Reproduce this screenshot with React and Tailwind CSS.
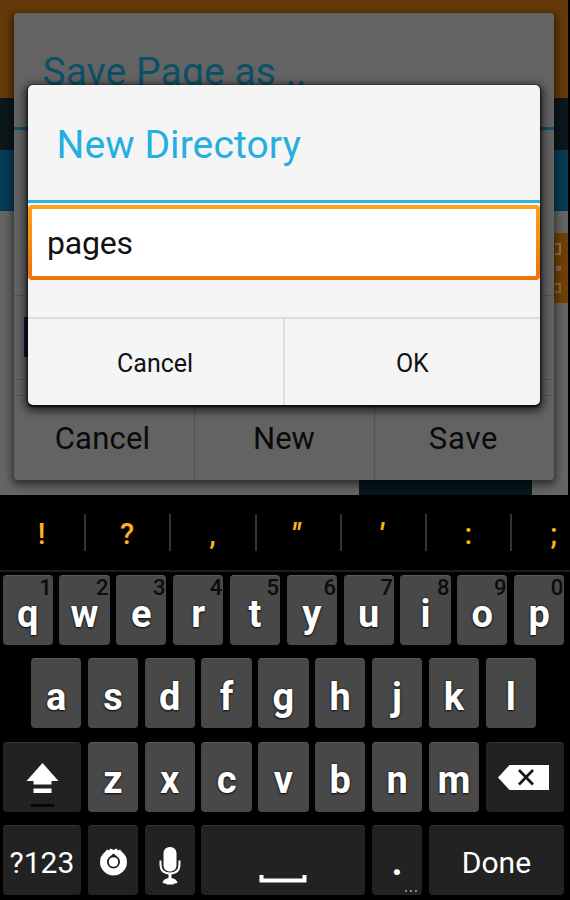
import React from "react";

const keyText = "[text-shadow:0_1px_2px_#111,0_0_2px_#111]";

function Key({ ch, hint }) {
  return (
    <div className="relative flex h-[70px] w-[50.2px] shrink-0 justify-center rounded-[4px] border-t border-[#5c5c5c] bg-[#484848]">
      <span className={"pt-[15.500px] text-[38px] leading-[44px] font-bold text-white " + keyText}>{ch}</span>
      {hint && <span className="absolute top-0 right-[1px] text-[22px] leading-6 font-medium text-[#0c0c0c]">{hint}</span>}
    </div>
  );
}

function DarkKey({ className, children }) {
  return (
    <div className={"relative flex h-[70px] shrink-0 items-center justify-center rounded-[4px] border-t border-[#343434] bg-[#222] text-white " + className}>
      {children}
    </div>
  );
}

const hints = "1234567890";

function Keyboard() {
  return (
    <div className="relative h-[405px] bg-black">
      <div className="flex h-[77px] items-center overflow-hidden border-b-2 border-[#1c1c1c] text-[29px] font-medium text-[#fdb31a]">
        {["!", "?", ",", '"', "'", ":", ";"].map((c) => (
          <div key={c} className="flex h-[37px] w-[85.3px] shrink-0 items-center justify-center border-r-2 border-[#343434] pt-[5px] pr-[1px] first:w-[86px]">
            <span className={c === '"' || c === "'" ? "pr-[4px] font-bold italic" : ""}>{c}</span>
          </div>
        ))}
      </div>
      <div className="flex flex-col gap-[13.4px] pt-[3px]">
        <div className="flex gap-[6.65px] pl-[2.6px]">
          {"qwertyuiop".split("").map((c, i) => <Key key={c} ch={c} hint={hints[i]} />)}
        </div>
        <div className="flex gap-[6.65px] pl-[31px]">
          {"asdfghjkl".split("").map((c) => <Key key={c} ch={c} />)}
        </div>
        <div className="flex gap-[6.65px] pl-[2.6px]">
          <DarkKey className="w-[78.6px]">
            <svg className="absolute top-0 left-0" width="78" height="69" viewBox="0 0 78 69">
              <path d="M39.5 20 L55.5 38 H48.5 V41.5 H30.5 V38 H23.5 Z M30.5 45.5 H48.5 V50 H30.5 Z" fill="#fff" />
              <rect x="27.500" y="61" width="24" height="3" rx="1" fill="#080808" />
            </svg>
          </DarkKey>
          {"zxcvbnm".split("").map((c) => <Key key={c} ch={c} />)}
          <DarkKey className="w-[78.6px]">
            <svg className="absolute top-0 left-0" width="78" height="69" viewBox="0 0 78 69">
              <path d="M12 34.5 L23.500 22 H63 V47 H23.500 Z" fill="#fff" />
              <path d="M33 27 L47 41.500 M47 27 L33 41.500" stroke="#151515" strokeWidth="2.600" />
            </svg>
          </DarkKey>
        </div>
        <div className="flex gap-[6.65px] pl-[2.6px]">
          <DarkKey className="w-[78.6px] pt-[3px] text-[30px]">?123</DarkKey>
          <DarkKey className="w-[50.2px]">
            <svg className="absolute top-0 left-0" width="50" height="69" viewBox="0 0 50 69">
              <path d="M17 26 L19 23.500 L21 24.500 L22.500 22.500 L25.500 24 L28.500 22.500 L30 24.500 L32 23.500 L34 26 Q39 30 39 36 A13.500 13.500 0 0 1 12 36 Q12 30 17 26 Z" fill="#fff" />
              <path d="M25.500 27.500 L29 30.500 Q32 32.500 32 36 A6.500 6.500 0 0 1 19 36 Q19 32.500 22 30.500 Z" fill="#1a1a1a" />
              <circle cx="25.500" cy="36" r="4.800" fill="#fff" />
            </svg>
          </DarkKey>
          <DarkKey className="w-[50.2px]">
            <svg className="absolute top-0 left-0" width="50" height="69" viewBox="0 0 50 69">
              <rect x="18.500" y="21" width="13" height="24.500" rx="6" fill="#fff" />
              <path d="M15.500 34.500 V38 Q15.500 47.500 25 47.500 Q34.500 47.500 34.500 38 V34.500" fill="none" stroke="#fff" strokeWidth="2" />
              <path d="M23.500 47 H26.500 V52 Q32 53 32.500 57 Q29 57 28 58.500 H22 Q21 57 17.500 57 Q18 53 23.500 52 Z" fill="#fff" />
            </svg>
          </DarkKey>
          <DarkKey className="w-[163.8px]">
            <svg className="absolute top-0 left-0" width="163" height="69" viewBox="0 0 163 69">
              <path d="M60.500 49 V54.500 H103.500 V49" fill="none" stroke="#fff" strokeWidth="4" />
            </svg>
          </DarkKey>
          <DarkKey className="w-[50.2px]">
            <span className="pt-[4px] text-[38px] font-bold">.</span>
            <span className="absolute right-[5px] bottom-[3px] flex gap-[3px]">
              <i className="size-[2px] bg-[#888]" /><i className="size-[2px] bg-[#888]" /><i className="size-[2px] bg-[#888]" />
            </span>
          </DarkKey>
          <DarkKey className="w-[135.4px] pt-[3px] text-[30px]">Done</DarkKey>
        </div>
      </div>
    </div>
  );
}

function SaveDialog() {
  return (
    <div className="absolute top-[12.5px] left-[13.5px] flex h-[467px] w-[540px] flex-col rounded-[4px] bg-[#636363] shadow-[0_3px_9px_2px_rgba(0,0,0,0.55)]">
      <div className="h-[117px] border-b-[3px] border-[#0d5266] pt-[35px] pl-[29px] text-[39px] leading-[48px] tracking-[0.1px] whitespace-nowrap text-[#0c5068]">Save Page as ..</div>
      <div className="h-[166px] border-b border-[#525252]" />
      <div className="relative h-[84px] border-b border-[#525252]">
        <div className="absolute top-[21px] left-[10px] h-[40px] w-[8px] bg-[#10183c]" />
      </div>
      <div className="h-[16px] border-b border-[#525252]" />
      <div className="flex flex-1 text-[31px] leading-9 text-[#0a0a0a]">
        <div className="w-[181px] border-r border-[#525252] pt-[25px] pr-[2px] text-center tracking-[0.2px]">Cancel</div>
        <div className="w-[180px] border-r border-[#525252] pt-[25px] text-center">New</div>
        <div className="flex-1 pt-[25px] pr-[1px] text-center tracking-[0.8px]">Save</div>
      </div>
    </div>
  );
}

function NewDirectoryDialog() {
  return (
    <div className="absolute top-[85px] left-[27.5px] flex h-[320px] w-[512.5px] flex-col rounded-[5px] bg-[#f5f5f5] shadow-[0_3px_9px_3px_rgba(0,0,0,0.65),0_1px_2px_1px_rgba(0,0,0,0.7)]">
      <div className="h-[118px] border-b-[3px] border-[#2cb1e1] pt-[36px] pl-[29px] text-[39px] leading-[48px] tracking-[0.1px] text-[#24b0df]">New Directory</div>
      <div className="mt-[2px] h-[75px] rounded-[4px] bg-linear-to-b from-[#fca31c] to-[#ec740c] p-[4px]">
        <div className="h-full rounded-[1px] bg-white pt-[15px] pl-[15.500px] text-[32px] leading-[38px] tracking-[-0.2px] text-[#111]">pages</div>
      </div>
      <div className="h-[39px] border-b-2 border-[#dcdcdc]" />
      <div className="flex flex-1 text-[25px] leading-8 text-[#111]">
        <div className="flex-1 border-r-2 border-[#dedede] pt-[29px] text-center">Cancel</div>
        <div className="flex-1 pt-[29px] text-center">OK</div>
      </div>
    </div>
  );
}

export default function App() {
  return (
    <div className="h-[900px] w-[570px] overflow-hidden bg-black font-[Roboto,sans-serif]">
      <div className="relative h-[495px] overflow-hidden">
        <div className="flex h-full w-[568px] flex-col bg-[#656565]">
          <div className="h-[98px] bg-[#643a0b]" />
          <div className="h-[52px] bg-[#0a171b]" />
          <div className="h-[61px] bg-[#073b53]" />
          <div className="mt-[22px] flex h-[70px] w-[30px] flex-col items-end justify-around self-end bg-[#704008] py-1 pr-[7px]">
            <i className="h-[12px] w-[6px] border-2 border-l-0 border-[#8e7250]" />
            <i className="size-[5px] bg-[#8e6250]" />
            <i className="h-[10px] w-[6px] border-2 border-l-0 border-[#847030]" />
          </div>
          <div className="mt-auto mr-[36px] h-[15px] w-[173px] self-end bg-[#07171b]" />
        </div>
        <SaveDialog />
        <NewDirectoryDialog />
      </div>
      <Keyboard />
    </div>
  );
}
